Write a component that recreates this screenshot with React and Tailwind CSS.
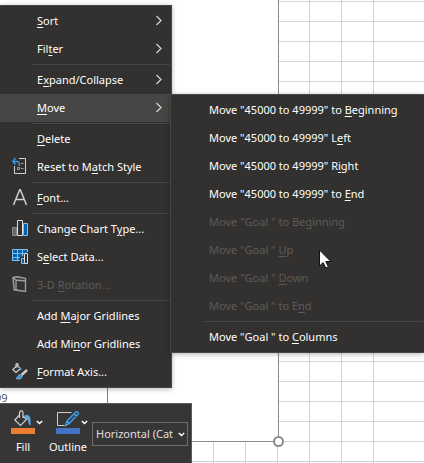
import React from "react";

function ResetIcon() {
  return (
    <svg width="16" height="18" viewBox="0 0 16 18" fill="none">
      <path d="M7 .5h6.500v15h-11V8" stroke="#d2d0ce" />
      <path d="M3.500 0 .7 3.500l2.800 3M1 3.500h4.500C7 3.500 7.500 4.500 7.500 8" stroke="#3a96dd" strokeWidth="1.500" />
      <path d="M5.500 9.500h2v2h-2zM9 5.500h2.500M9 10.500h2.500" stroke="#a19f9d" />
    </svg>
  );
}

function FontIcon() {
  return (
    <svg width="16" height="18" viewBox="0 0 16 18" fill="none">
      <path d="M1.500 16 7.800.500h.4L14.500 16M4 10.500h8" stroke="#d2d0ce" strokeWidth="1.500" />
    </svg>
  );
}

function ChartTypeIcon() {
  return (
    <svg width="16" height="18" viewBox="0 0 16 18" fill="none">
      <path d="M.5 7.500h4v8h-4z" fill="#6b6967" stroke="#8a8886" />
      <path d="M11.500 3.500h4v12h-4z" fill="#0063b1" stroke="#83beec" />
      <path d="M5.500.5h5v15h-5z" fill="#323130" stroke="#e1dfdd" />
    </svg>
  );
}

function SelectDataIcon() {
  return (
    <svg width="16" height="18" viewBox="0 0 16 18" fill="none">
      <path d="M0 1h16v4h-4v4H8v4H0z" fill="#0063b1" />
      <path d="M.5 12.500v-11h15V4M0 5.500h12M0 9.500h8M5.500 1v11.500M10.500 1v7M0 12.500h7.500" stroke="#83beec" />
      <path d="M9.500 10.500h3v5h-3z" fill="#0063b1" stroke="#83beec" />
      <path d="M12.500 5.500h3v10h-3z" fill="#323130" stroke="#e1dfdd" />
    </svg>
  );
}

function RotationIcon() {
  return (
    <svg width="16" height="18" viewBox="0 0 16 18" fill="none">
      <path d="M1 1.500 5.500.7l8 1.800v13L2.200 13.800z" stroke="#a19f9d" strokeWidth="1.400" />
      <path d="M1 1.500 4 4l9.500 1M4 4v10" stroke="#a19f9d" strokeWidth="1.300" />
    </svg>
  );
}

function FormatAxisIcon() {
  return (
    <svg width="16" height="18" viewBox="0 0 16 18" fill="none">
      <path d="M5 2.500.8 6.500 4 9.500 8.500 5.500zM4 5V1.200c0-.8 2-.8 2 0v3" stroke="#d2d0ce" strokeWidth="1.200" />
      <path d="M7.500 4.500c1 .5 1.500 1.200 1.500 3" stroke="#3a96dd" strokeWidth="1.500" />
      <path d="m15 7-5.500 5" stroke="#d2d0ce" strokeWidth="2.400" />
      <path d="M4 15.500c1.800-.2 1.300-3.500 4-4l2.200 2c-.4 2.500-3.600 3-6.200 2z" fill="#3a96dd" stroke="#83beec" strokeWidth=".8" />
    </svg>
  );
}

function FillIcon() {
  return (
    <svg width="24" height="17" viewBox="0 0 24 17" fill="none">
      <path d="M8.500 5 3.800 10 9.500 15.500 15.500 9.500 12.500 6.500M8.500 8V2.500c0-2.200 3.500-2.200 3.500 0V8" stroke="#d2d0ce" strokeWidth="1.200" />
      <path d="M13 5.500c4-1.500 6.500 0 6.500 4.500v5.500c-2-1-2.500-2.500-2.300-5z" fill="#5aaae6" />
    </svg>
  );
}

function OutlineIcon() {
  return (
    <svg width="24" height="17" viewBox="0 0 24 17" fill="none">
      <path d="M15.500 2.500h-14v13h7" stroke="#d2d0ce" />
      <path d="m9.500 15.500 1.300-4.500 9-9c1.500-1.200 3.400.7 2.500 2.200l-9 9.300zM18 3.800l2.700 2.700M10.800 11l2.500 2.500" fill="#1f4e79" stroke="#4aa3e6" strokeWidth="1.200" />
    </svg>
  );
}

function SubmenuArrow() {
  return (
    <svg width="8" height="12" viewBox="0 0 8 12" fill="none" className="mr-[7px]">
      <path d="m1.500 1 4.500 4.500L1.500 10" stroke="#d2d0ce" strokeWidth="1.300" />
    </svg>
  );
}

function DropArrow({ className }) {
  return (
    <svg width="7" height="5" viewBox="0 0 7 5" fill="none" className={className}>
      <path d="m.8 1 2.700 2.500L6.200 1" stroke="#fff" strokeWidth="1.500" />
    </svg>
  );
}

// An underscore precedes the letter that serves as the access key.
function Mnemonic({ text }) {
  const at = text.indexOf("_");
  return (
    <span className="whitespace-pre">
      {text.slice(0, at)}
      <u className="underline-offset-2">{text[at + 1]}</u>
      {text.slice(at + 2)}
    </span>
  );
}

const mainGroups = [
  [
    { text: "_Sort", more: true },
    { text: "Fil_ter", more: true },
  ],
  [
    { text: "E_xpand/Collapse", more: true },
    { text: "_Move", more: true, open: true },
  ],
  [{ text: "_Delete" }, { text: "Reset to M_atch Style", Icon: ResetIcon }],
  [{ text: "_Font...", Icon: FontIcon }],
  [
    { text: "Change Chart T_ype...", Icon: ChartTypeIcon },
    { text: "S_elect Data...", Icon: SelectDataIcon },
    { text: "3-D _Rotation...", Icon: RotationIcon, disabled: true },
  ],
  [
    { text: "Add _Major Gridlines" },
    { text: "Add Mi_nor Gridlines" },
    { text: "_Format Axis...", Icon: FormatAxisIcon },
  ],
];

const moveGroups = [
  [
    { text: 'Move "45000 to 49999" to _Beginning' },
    { text: 'Move "45000 to 49999" L_eft' },
    { text: 'Move "45000 to 49999" R_ight' },
    { text: 'Move "45000 to 49999" to _End' },
    { text: 'Move "Goal " to Be_ginning', disabled: true },
    { text: 'Move "Goal " _Up', disabled: true },
    { text: 'Move "Goal " _Down', disabled: true },
    { text: 'Move "Goal " to E_nd', disabled: true },
  ],
  [{ text: 'Move "Goal " to _Columns' }],
];

function MenuItem({ text, Icon, more, open, disabled }) {
  return (
    <button
      type="button"
      role="menuitem"
      disabled={disabled}
      aria-haspopup={more ? "menu" : undefined}
      aria-expanded={more ? Boolean(open) : undefined}
      className={`flex h-7 w-full items-center text-left ${open ? "bg-[#484644]" : ""} ${
        disabled ? "text-[#5d5b59]" : "text-white"
      }`}
    >
      <span className="flex w-[37px] shrink-0 pl-3">{Icon && <Icon />}</span>
      <span className="flex-1">
        <Mnemonic text={text} />
      </span>
      {more && <SubmenuArrow />}
    </button>
  );
}

function Menu({ label, groups, className }) {
  return (
    <div
      role="menu"
      aria-label={label}
      className={`absolute border-[#484644] bg-[#323130] py-px pr-px shadow-[0_1px_5px_rgba(0,0,0,0.3)] ${className}`}
    >
      {groups.map((group, i) => (
        <React.Fragment key={i}>
          {i > 0 && <div role="separator" className="my-px ml-8 h-px bg-[#484644]" />}
          {group.map((item) => (
            <MenuItem key={item.text} {...item} />
          ))}
        </React.Fragment>
      ))}
    </div>
  );
}

function Worksheet() {
  return (
    <div className="flex h-screen bg-[linear-gradient(#d4d4d4_1px,transparent_1px)] bg-[length:100%_20px] bg-[position:0_1px]">
      <div className="w-[22px] border-r border-[#d4d4d4]" />
      {Array.from({ length: 11 }, (_, i) => (
        <div key={i} className="w-8 shrink-0 border-r border-[#d4d4d4]" />
      ))}
    </div>
  );
}

function Chart() {
  return (
    <div className="absolute top-0 left-0 h-[442px] w-[279px] border-r border-b border-[#8c8c8c] bg-white pt-5">
      <div className="flex h-[384px] w-[108px] items-end border-r border-[#7f7f7f]">
        <span className="-ml-[5px] text-[11px] leading-3 text-[#595959]">99</span>
      </div>
      <span className="absolute -right-1.5 -bottom-1.5 size-[11px] rounded-full border-2 border-[#8c8c8c] bg-white" />
    </div>
  );
}

function ColorButton({ label, Icon, barClass, className }) {
  return (
    <button type="button" className={`flex shrink-0 items-start ${className}`}>
      <span className="flex w-6 flex-col items-center">
        <Icon />
        <span className={`mt-px h-1.5 w-full ${barClass}`} />
        <span className="mt-[5px] leading-4 whitespace-nowrap">{label}</span>
      </span>
      <DropArrow className="mt-2.5 ml-px" />
    </button>
  );
}

function MiniToolbar() {
  return (
    <div
      role="toolbar"
      aria-label="Chart formatting"
      className="absolute top-[403px] left-0 flex h-[60px] w-48 items-start border-t border-r border-[#5a5a5a] bg-[#363636] pt-1.5 pl-[11px] text-white"
    >
      <ColorButton label="Fill" Icon={FillIcon} barClass="bg-[#ed7d31]" className="w-[45px]" />
      <ColorButton label="Outline" Icon={OutlineIcon} barClass="bg-[#4472c4]" className="w-9" />
      <div className="relative mt-3 w-24">
        <select
          aria-label="Chart element"
          className="block h-6 w-full appearance-none border border-[#6e6e6e] bg-transparent pr-3.5 pl-[3px] text-[11px] text-[#e1dfdd]"
        >
          <option>Horizontal (Category) Axis</option>
        </select>
        <DropArrow className="pointer-events-none absolute top-2.5 right-[3px]" />
      </div>
    </div>
  );
}

function Pointer() {
  return (
    <svg width="14" height="21" viewBox="0 0 14 21" className="pointer-events-none absolute top-[249px] left-[319px]">
      <path d="M.5 1v16l3.700-3.500 2.500 5.500 2.600-1.100-2.500-5.400h5.100z" fill="#fff" stroke="#111" />
    </svg>
  );
}

export default function App() {
  return (
    <main className="relative h-screen overflow-hidden bg-white font-['Noto_Sans','Open_Sans',sans-serif] text-[11px]">
      <Worksheet />
      <Chart />
      <Menu label="Chart" groups={mainGroups} className="top-[5px] left-0 w-[172px] border-t border-r border-b" />
      <MiniToolbar />
      <Menu
        label="Move"
        groups={moveGroups}
        className="top-[94px] right-0 left-[170px] border-t border-b border-l pl-px"
      />
      <Pointer />
    </main>
  );
}
